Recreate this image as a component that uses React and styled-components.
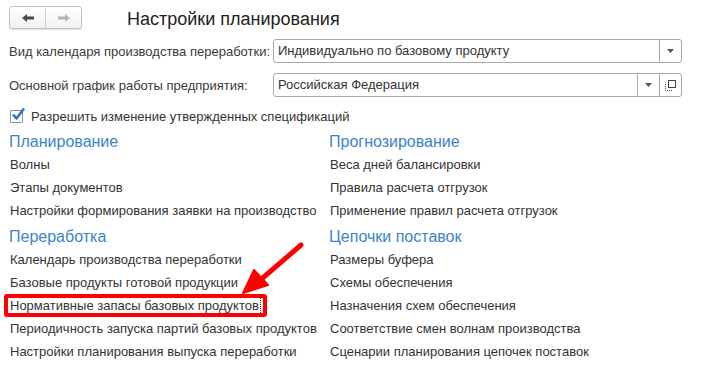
import React from "react";
import styled, { createGlobalStyle } from "styled-components";

const GlobalStyle = createGlobalStyle`
  body {
    margin: 0;
    background: #fff;
    font-family: "Liberation Sans", Arial, sans-serif;
    color: #333;
  }
`;

const left = [
  {
    title: "Планирование",
    links: ["Волны", "Этапы документов", "Настройки формирования заявки на производство"],
  },
  {
    title: "Переработка",
    links: [
      "Календарь производства переработки",
      "Базовые продукты готовой продукции",
      "Нормативные запасы базовых продуктов",
      "Периодичность запуска партий базовых продуктов",
      "Настройки планирования выпуска переработки",
    ],
  },
];

const right = [
  {
    title: "Прогнозирование",
    links: ["Веса дней балансировки", "Правила расчета отгрузок", "Применение правил расчета отгрузок"],
  },
  {
    title: "Цепочки поставок",
    links: [
      "Размеры буфера",
      "Схемы обеспечения",
      "Назначения схем обеспечения",
      "Соответствие смен волнам производства",
      "Сценарии планирования цепочек поставок",
    ],
  },
];

const ArrowLeft = ({ color }) => (
  <svg width="14" height="10" viewBox="0 0 14 10">
    <path d="M1 5 L6 1 L6 3.6 L13 3.6 L13 6.4 L6 6.4 L6 9 Z" fill={color} />
  </svg>
);

const ArrowRight = ({ color }) => (
  <svg width="14" height="10" viewBox="0 0 14 10">
    <path d="M13 5 L8 1 L8 3.6 L1 3.6 L1 6.4 L8 6.4 L8 9 Z" fill={color} />
  </svg>
);

const Caret = () => (
  <svg width="7" height="4" viewBox="0 0 7 4">
    <path d="M0 0 L7 0 L3.5 4 Z" fill="#555" />
  </svg>
);

const OpenIcon = () => (
  <svg width="11" height="11" viewBox="0 0 11 11">
    <rect x="3.5" y="0.5" width="7" height="7" fill="none" stroke="#444" />
    <path d="M0.5 4 L0.5 10.5 L7 10.5" fill="none" stroke="#444" strokeDasharray="1 1" />
  </svg>
);

const Field = ({ value, open }) => (
  <Input>
    <InputText>{value}</InputText>
    <InputButton>
      <Caret />
    </InputButton>
    {open && (
      <InputButton>
        <OpenIcon />
      </InputButton>
    )}
  </Input>
);

const Column = ({ sections }) => (
  <Sections>
    {sections.map((s) => (
      <Section key={s.title}>
        <SectionTitle>{s.title}</SectionTitle>
        {s.links.map((l) => (
          <LinkRow key={l}>
            {l === "Нормативные запасы базовых продуктов" ? (
              <Focused>
                {l}
                <Highlight />
              </Focused>
            ) : (
              l
            )}
          </LinkRow>
        ))}
      </Section>
    ))}
  </Sections>
);

export default function App() {
  return (
    <Page>
      <GlobalStyle />
      <TopBar>
        <NavGroup>
          <NavButton>
            <ArrowLeft color="#4a4a4a" />
          </NavButton>
          <NavButton>
            <ArrowRight color="#b3b3b3" />
          </NavButton>
        </NavGroup>
        <Title>Настройки планирования</Title>
      </TopBar>

      <Form>
        <Label>Вид календаря производства переработки:</Label>
        <Field value="Индивидуально по базовому продукту" />
        <Label>Основной график работы предприятия:</Label>
        <Field value="Российская Федерация" open />
      </Form>

      <CheckRow>
        <CheckBox>
          <svg width="16" height="16" viewBox="0 0 16 16">
            <path
              d="M3 7.5 L6.5 11.5 L14 1.5"
              fill="none"
              stroke="#2f73c9"
              strokeWidth="2.6"
              strokeLinejoin="round"
            />
          </svg>
        </CheckBox>
        Разрешить изменение утвержденных спецификаций
      </CheckRow>

      <Columns>
        <Column sections={left} />
        <Column sections={right} />
      </Columns>

      <Pointer width="80" height="70" viewBox="235 235 80 70">
        <line x1="301" y1="245" x2="258" y2="282" stroke="#f00" strokeWidth="5" strokeLinecap="round" />
        <polygon points="243,293 254,270 268,285" fill="#f00" stroke="#f00" strokeWidth="2" strokeLinejoin="round" />
      </Pointer>
    </Page>
  );
}

const Page = styled.div`
  position: relative;
  width: 701px;
  height: 387px;
  padding: 6px 0 0 9px;
  box-sizing: border-box;
  font-size: 13px;
  overflow: hidden;
`;

const TopBar = styled.div`
  display: flex;
  align-items: center;
  height: 23px;
`;

const NavGroup = styled.div`
  display: flex;
  height: 23px;
  border: 1px solid #c2c2c2;
  border-radius: 3px;
  box-sizing: border-box;
  background: linear-gradient(#ffffff, #f1f1f1);
  box-shadow: 0 1px 1px rgba(0, 0, 0, 0.12);
`;

const NavButton = styled.div`
  width: 35px;
  display: flex;
  align-items: center;
  justify-content: center;
  & + & {
    border-left: 1px solid #d4d4d4;
  }
`;

const Title = styled.div`
  margin-left: 45px;
  margin-top: 3px;
  font-size: 18px;
  color: #222;
`;

const Form = styled.div`
  display: grid;
  grid-template-columns: 264px 409px;
  grid-auto-rows: 24px;
  row-gap: 10px;
  margin-top: 10px;
  align-items: center;
`;

const Label = styled.div`
  color: #3a3a3a;
`;

const Input = styled.div`
  display: flex;
  height: 24px;
  border: 1px solid #a8a8a8;
  border-radius: 3px;
  box-sizing: border-box;
`;

const InputText = styled.div`
  flex: 1;
  padding-left: 4px;
  line-height: 22px;
  color: #333;
`;

const InputButton = styled.div`
  width: 21px;
  border-left: 1px solid #a8a8a8;
  display: flex;
  align-items: center;
  justify-content: center;
`;

const CheckRow = styled.div`
  display: flex;
  align-items: center;
  height: 20px;
  margin-top: 9px;
  color: #333;
`;

const CheckBox = styled.div`
  position: relative;
  width: 13px;
  height: 13px;
  margin: 0 8px 0 1px;
  border: 1px solid #8f8f8f;
  border-radius: 1px;
  box-sizing: border-box;
  svg {
    position: absolute;
    left: -1px;
    top: -4px;
  }
`;

const Columns = styled.div`
  display: grid;
  grid-template-columns: 320px auto;
  margin-top: 5px;
`;

const Sections = styled.div`
  display: flex;
  flex-direction: column;
  gap: 4px;
`;

const Section = styled.div`
  display: flex;
  flex-direction: column;
`;

const SectionTitle = styled.div`
  height: 22px;
  line-height: 22px;
  font-size: 16px;
  color: #3d83c9;
`;

const LinkRow = styled.div`
  height: 23px;
  line-height: 23px;
  padding-left: 1px;
  color: #333;
  white-space: nowrap;
`;

const Focused = styled.span`
  position: relative;
  display: inline-block;
  vertical-align: top;
  margin-top: 4px;
  height: 15px;
  line-height: 15px;
  padding-right: 1px;
  border-right: 1px dotted #333;
`;

const Highlight = styled.span`
  position: absolute;
  left: -6px;
  right: -7px;
  top: -4px;
  bottom: -4px;
  border: 4px solid #f00;
  border-radius: 3px;
`;

const Pointer = styled.svg`
  position: absolute;
  left: 235px;
  top: 235px;
  overflow: visible;
`;
